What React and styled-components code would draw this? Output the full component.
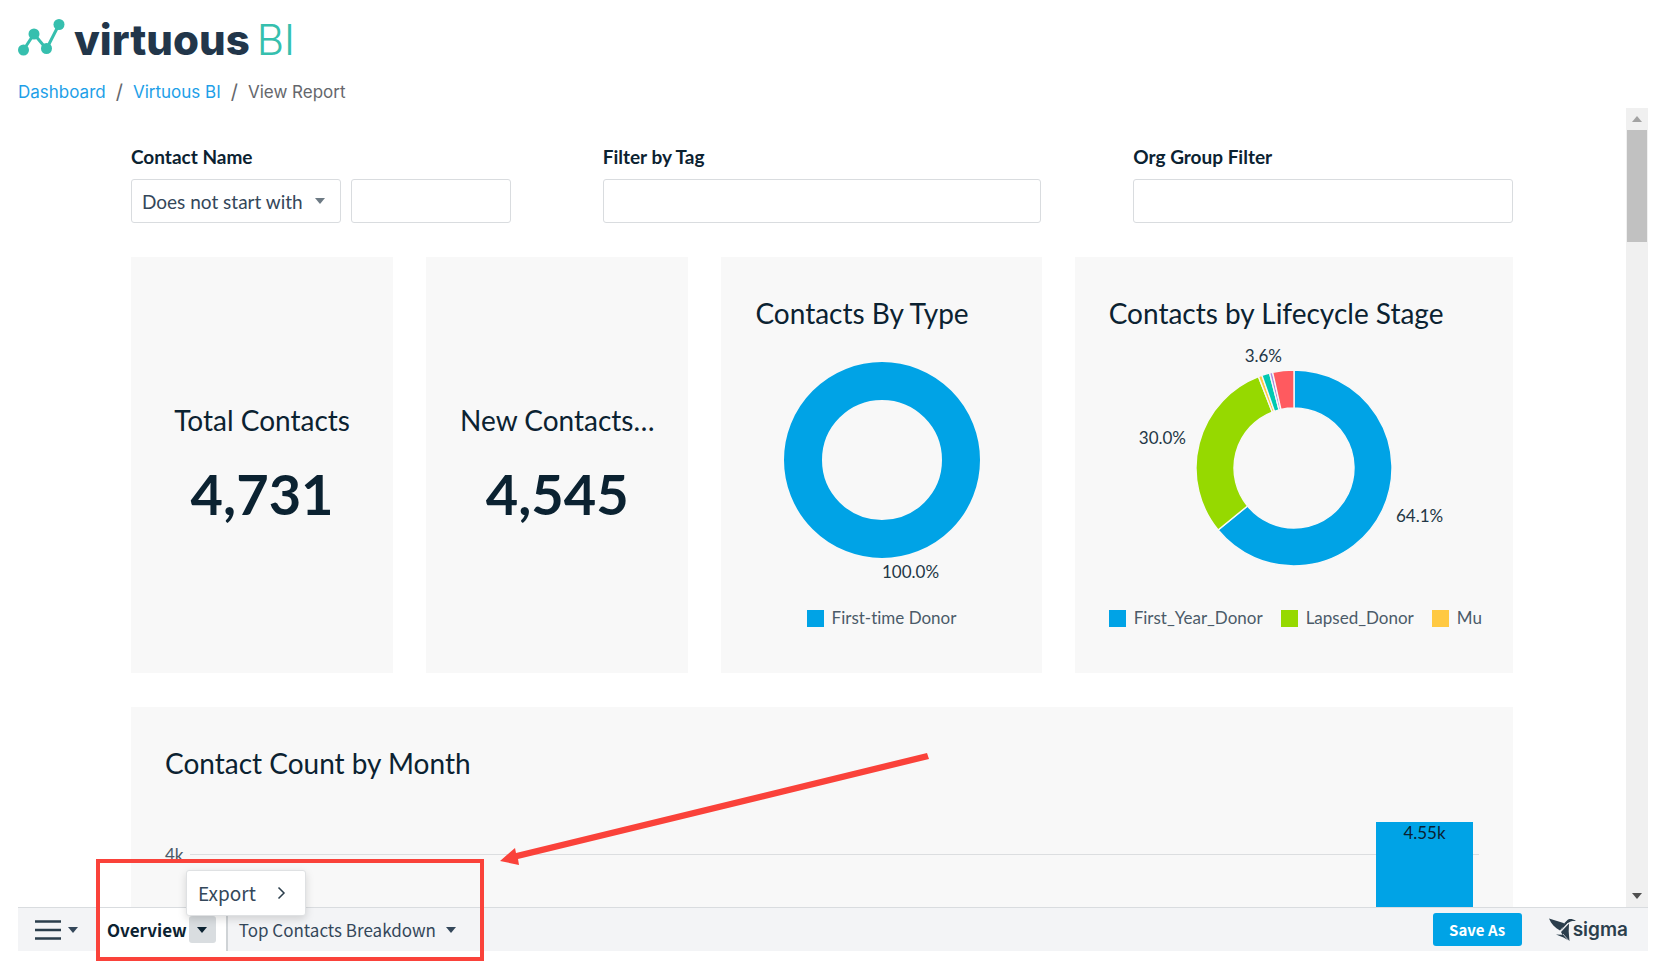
import React, { useState } from 'react'
import styled, { createGlobalStyle } from 'styled-components'

const colors = {
  ink: '#0b2231',
  text: '#34475a',
  muted: '#4b5b69',
  blue: '#00a3e6',
  green: '#96d900',
  yellow: '#ffc942',
  teal: '#00c9b1',
  purple: '#a98be0',
  red: '#ff5a5f',
  card: '#f8f8f8',
  bar: '#f3f4f6',
  border: '#d9dcdf',
  callout: '#fa423a'
}

const GlobalStyle = createGlobalStyle`
  * {
    box-sizing: border-box;
  }

  body {
    margin: 0;
    background: white;
    color: ${colors.ink};
    font-family: Lato, sans-serif;
    font-variant-ligatures: none;
  }

  button, input, select {
    font: inherit;
    color: inherit;
  }
`

const Page = styled.div`
  display: flex;
  flex-direction: column;
  height: 100vh;
  padding: 0 6px 13px 18px;
  overflow: hidden;
`
const Header = styled.header`
  flex: 0 0 108px;
  padding-top: 16px;
  font-family: Inter, sans-serif;
`
const Logo = styled.div`
  display: flex;
  align-items: center;
  height: 48px;
  color: #22364a;
  font-size: 42px;
  line-height: 48px;
  font-weight: 800;

  svg {
    margin-right: 8px;
  }
`
const LogoSuffix = styled.span`
  margin-left: 7px;
  color: #36bfae;
  font-weight: 300;
`
const Breadcrumb = styled.nav`
  display: flex;
  gap: 10px;
  margin-top: 16px;
  color: #65676c;
  font-size: 17px;
  line-height: 24px;

  a {
    color: #1e9fe8;
    text-decoration: none;
  }
`
const Separator = styled.span`
  font-size: 20px;
`
const Viewport = styled.div`
  display: flex;
  flex: 1;
  min-height: 0;
`
const Content = styled.main`
  flex: 1;
  min-width: 0;
  padding: 36px 113px 0;
  overflow: hidden;
`
const Filters = styled.div`
  display: grid;
  grid-template-columns: 380fr 439fr 380fr;
  column-gap: 92px;
  margin-bottom: 34px;
`
const Label = styled.label`
  display: block;
  margin-bottom: 9px;
  font-size: 19px;
  line-height: 26px;
  font-weight: 700;
`
const Controls = styled.div`
  display: flex;
  gap: 10px;
`
const SelectBox = styled.div`
  position: relative;
  flex: 0 0 210px;

  svg {
    position: absolute;
    right: 16px;
    top: 19px;
    pointer-events: none;
  }
`
const Select = styled.select`
  width: 100%;
  height: 44px;
  padding: 0 10px;
  appearance: none;
  border: 1px solid ${colors.border};
  border-radius: 3px;
  background: white;
  color: ${colors.text};
  font-size: 19px;
`
const Input = styled.input`
  width: 100%;
  min-width: 0;
  height: 44px;
  padding: 0 12px;
  border: 1px solid ${colors.border};
  border-radius: 3px;
  font-size: 19px;
`
const Cards = styled.div`
  display: grid;
  grid-template-columns: 262fr 262fr 320fr 438fr;
  gap: 33px;
`
const Card = styled.section`
  min-width: 0;
  height: 416px;
  padding: 39px 34px 0;
  background: ${colors.card};
`
const Kpi = styled(Card)`
  display: flex;
  flex-direction: column;
  align-items: center;
  justify-content: center;
  gap: 22px;
  padding: 2px 0 0;
`
const Title = styled.h2`
  margin: 0;
  font-size: 28px;
  line-height: 34px;
  font-weight: 400;
`
const KpiValue = styled.div`
  font-size: 56px;
  line-height: 70px;
  font-weight: 700;
`
const Chart = styled.svg`
  display: block;
  margin: 0 auto;
  overflow: visible;
  fill: #233746;
  font-size: 17px;
`
const Legend = styled.div`
  display: flex;
  justify-content: ${props => (props.$start ? 'flex-start' : 'center')};
  gap: 18px;
  color: ${colors.muted};
  font-size: 17px;
  line-height: 36px;
  white-space: nowrap;
`
const LegendItem = styled.div`
  display: flex;
  align-items: center;
  gap: 8px;

  &::before {
    content: '';
    width: 17px;
    height: 17px;
    background: ${props => props.$color};
  }
`
const MonthCard = styled(Card)`
  margin-top: 34px;
`
const Plot = styled.div`
  display: grid;
  grid-template-columns: auto 1fr;
  column-gap: 6px;
  margin-top: 42px;
  color: ${colors.muted};
  font-size: 17px;
`
const Tick = styled.div`
  padding-top: 23px;
  line-height: 20px;
`
const PlotArea = styled.div`
  display: flex;
  justify-content: flex-end;
  height: 260px;
  padding-right: 6px;
  background: linear-gradient(#dcdee0, #dcdee0) 0 32px / 100% 1px no-repeat;
`
const Bar = styled.div`
  width: 97px;
  background: ${colors.blue};
  color: ${colors.ink};
  line-height: 22px;
  text-align: center;
`
const Scrollbar = styled.div`
  display: flex;
  flex: 0 0 22px;
  flex-direction: column;
  align-items: center;
  background: #f0f0f0;
`
const ScrollButton = styled.button`
  display: flex;
  align-items: center;
  justify-content: center;
  width: 22px;
  height: 22px;
  padding: 0;
  border: 0;
  background: none;
`
const Thumb = styled.div`
  width: 20px;
  height: 112px;
  margin-bottom: auto;
  background: #c1c1c1;
`
const BottomBar = styled.footer`
  position: relative;
  display: flex;
  flex: 0 0 44px;
  align-items: stretch;
  border-top: 1px solid ${colors.border};
  background: ${colors.bar};
  color: ${colors.text};
  font-family: 'Noto Sans CJK SC', sans-serif;
`
const MenuButton = styled.button`
  display: flex;
  flex: 0 0 78px;
  align-items: center;
  gap: 7px;
  padding: 0 0 0 17px;
  border: 0;
  background: none;
`
const Tab = styled.div`
  position: relative;
  display: flex;
  align-items: center;
  padding: 0 10px 0 11px;
  border-right: ${props => (props.$active ? '2px solid #cfd3d6' : '0')};
  background: ${props => (props.$active ? 'white' : 'none')};
  color: ${props => (props.$active ? colors.ink : colors.text)};
`
const TabName = styled.button`
  padding: 0;
  border: 0;
  background: none;
  font-size: 17px;
  line-height: 26px;
  font-weight: ${props => (props.$active ? 700 : 400)};
`
const TabCaret = styled.button`
  display: flex;
  align-items: center;
  justify-content: center;
  width: 27px;
  height: 27px;
  margin-left: 2px;
  padding: 0;
  border: 0;
  border-radius: 3px;
  background: ${props => (props.$open ? '#d9dde0' : 'none')};
`
const Menu = styled.div`
  position: absolute;
  left: 90px;
  bottom: 35px;
  z-index: 1;
  border: 1px solid #dfe1e3;
  border-radius: 3px;
  background: white;
  box-shadow: 0 3px 8px rgba(0, 0, 0, 0.15);
`
const MenuItem = styled.button`
  display: flex;
  align-items: center;
  justify-content: space-between;
  width: 118px;
  height: 44px;
  padding: 0 19px 0 11px;
  border: 0;
  background: none;
  color: ${colors.text};
  font-size: 19px;
  line-height: 26px;
`
const Actions = styled.div`
  display: flex;
  align-items: center;
  gap: 27px;
  margin-left: auto;
  padding-right: 20px;
`
const SaveButton = styled.button`
  width: 89px;
  height: 33px;
  padding: 0;
  border: 0;
  border-radius: 3px;
  background: ${colors.blue};
  color: white;
  font-size: 15px;
  line-height: 22px;
  font-weight: 700;
`
const Sigma = styled.a`
  display: flex;
  align-items: center;
  color: #2b3e4c;
  font-family: Inter, sans-serif;
  font-size: 19px;
  line-height: 24px;
  font-weight: 600;
  text-decoration: none;

  svg {
    margin-right: -3px;
  }
`
const Highlight = styled.div`
  position: absolute;
  left: 78px;
  top: -49px;
  z-index: 2;
  width: 388px;
  height: 102px;
  border: 4px solid ${colors.callout};
  pointer-events: none;
`
const Arrow = styled.svg`
  position: absolute;
  left: 482px;
  top: -158px;
  z-index: 2;
  fill: ${colors.callout};
  pointer-events: none;
`

const Caret = ({ color = colors.text, up }) => (
  <svg width='10' height='6' viewBox='0 0 10 6' aria-hidden='true'>
    <path d={up ? 'M0 6L5 0l5 6z' : 'M0 0h10L5 6z'} fill={color} />
  </svg>
)

const point = (radius, share) => {
  const angle = share * Math.PI * 2
  return `${radius * Math.sin(angle)} ${-radius * Math.cos(angle)}`
}

const Donut = ({ slices, cy, children }) => {
  let total = 0
  return (
    <Chart width='252' height='270' viewBox={`-126 ${-cy} 252 270`}>
      {slices.length === 1 ? (
        <circle r='79' fill='none' stroke={slices[0].color} strokeWidth='38' />
      ) : (
        slices.map(({ color, value }) => {
          const from = total / 100
          total += value
          const to = total / 100
          const large = value > 50 ? 1 : 0
          return (
            <path
              key={color}
              d={`M${point(98, from)}A98 98 0 ${large} 1 ${point(98, to)}L${point(60, to)}A60 60 0 ${large} 0 ${point(60, from)}Z`}
              fill={color}
              stroke={colors.card}
              strokeWidth='1.4'
            />
          )
        })
      )}
      {children}
    </Chart>
  )
}

const stages = [
  { color: colors.blue, value: 64.1 },
  { color: colors.green, value: 30 },
  { color: colors.yellow, value: 0.6 },
  { color: colors.teal, value: 1.3 },
  { color: colors.purple, value: 0.5 },
  { color: colors.red, value: 3.5 }
]

const App = () => {
  const [open, setOpen] = useState(true)
  const [operator, setOperator] = useState('Does not start with')

  return (
    <Page>
      <GlobalStyle />
      <Header>
        <Logo>
          <svg width='48' height='48' viewBox='0 0 48 48' aria-hidden='true'>
            <g fill='#36bfae'>
              <path d='M5.5 34L16 18l12.5 15L41 8.5' fill='none' stroke='#36bfae' strokeWidth='3' />
              <circle cx='5.5' cy='34' r='5.5' />
              <circle cx='16' cy='18' r='5.5' />
              <circle cx='28.5' cy='32.5' r='5.5' />
              <circle cx='41' cy='8.5' r='5.5' />
            </g>
          </svg>
          virtuous<LogoSuffix>BI</LogoSuffix>
        </Logo>
        <Breadcrumb aria-label='Breadcrumb'>
          <a href='#dashboard'>Dashboard</a>
          <Separator>/</Separator>
          <a href='#bi'>Virtuous BI</a>
          <Separator>/</Separator>
          <span>View Report</span>
        </Breadcrumb>
      </Header>
      <Viewport>
        <Content>
          <Filters>
            <div>
              <Label htmlFor='name'>Contact Name</Label>
              <Controls>
                <SelectBox>
                  <Select
                    aria-label='Contact name operator'
                    value={operator}
                    onChange={e => setOperator(e.target.value)}
                  >
                    <option>Does not start with</option>
                    <option>Starts with</option>
                  </Select>
                  <Caret color='#6d7a84' />
                </SelectBox>
                <Input id='name' />
              </Controls>
            </div>
            <div>
              <Label htmlFor='tag'>Filter by Tag</Label>
              <Input id='tag' />
            </div>
            <div>
              <Label htmlFor='group'>Org Group Filter</Label>
              <Input id='group' />
            </div>
          </Filters>
          <Cards>
            <Kpi>
              <Title>Total Contacts</Title>
              <KpiValue>4,731</KpiValue>
            </Kpi>
            <Kpi>
              <Title>New Contacts…</Title>
              <KpiValue>4,545</KpiValue>
            </Kpi>
            <Card>
              <Title>Contacts By Type</Title>
              <Donut cy={130} slices={[{ color: colors.blue, value: 100 }]}>
                <text x='0' y='118'>
                  100.0%
                </text>
              </Donut>
              <Legend>
                <LegendItem $color={colors.blue}>First-time Donor</LegendItem>
              </Legend>
            </Card>
            <Card>
              <Title>Contacts by Lifecycle Stage</Title>
              <Donut cy={138} slices={stages}>
                <text x='-12' y='-106' textAnchor='end'>
                  3.6%
                </text>
                <text x='-108' y='-24' textAnchor='end'>
                  30.0%
                </text>
                <text x='102' y='54'>
                  64.1%
                </text>
              </Donut>
              <Legend $start>
                <LegendItem $color={colors.blue}>First_Year_Donor</LegendItem>
                <LegendItem $color={colors.green}>Lapsed_Donor</LegendItem>
                <LegendItem $color={colors.yellow}>Mu</LegendItem>
              </Legend>
            </Card>
          </Cards>
          <MonthCard>
            <Title>Contact Count by Month</Title>
            <Plot>
              <Tick>4k</Tick>
              <PlotArea>
                <Bar>4.55k</Bar>
              </PlotArea>
            </Plot>
          </MonthCard>
        </Content>
        <Scrollbar>
          <ScrollButton aria-label='Scroll up'>
            <Caret color='#a3a3a3' up />
          </ScrollButton>
          <Thumb />
          <ScrollButton aria-label='Scroll down'>
            <Caret color='#505050' />
          </ScrollButton>
        </Scrollbar>
      </Viewport>
      <BottomBar>
        <MenuButton aria-label='Pages'>
          <svg width='26' height='20' viewBox='0 0 26 20' aria-hidden='true'>
            <path d='M0 1.5h26M0 10h26M0 18.5h26' stroke='#2b3e4c' strokeWidth='2.6' />
          </svg>
          <Caret />
        </MenuButton>
        <Tab $active>
          <TabName $active>Overview</TabName>
          <TabCaret $open={open} aria-label='Overview options' onClick={() => setOpen(!open)}>
            <Caret color={colors.ink} />
          </TabCaret>
          {open && (
            <Menu>
              <MenuItem>
                Export
                <svg width='9' height='14' viewBox='0 0 9 14' aria-hidden='true'>
                  <path d='M1.5 1.5L7 7l-5.5 5.5' fill='none' stroke='#2b3e4c' strokeWidth='1.5' />
                </svg>
              </MenuItem>
            </Menu>
          )}
        </Tab>
        <Tab>
          <TabName>Top Contacts Breakdown</TabName>
          <TabCaret aria-label='Top Contacts Breakdown options'>
            <Caret />
          </TabCaret>
        </Tab>
        <Actions>
          <SaveButton>Save As</SaveButton>
          <Sigma href='#sigma'>
            <svg width='27' height='24' viewBox='0 0 27 24' aria-hidden='true'>
              <g fill='#2b3e4c'>
                <path d='M0 .5L14.500 5l1.500 1.500-5 6C6 10 2 5.500 0 .5z' />
                <path d='M15.500 5L18 2.500c2-2 5-2 9 .5-4-.3-6 .3-8 2l-7 7.500z' />
                <path d='M12 14l8-8.500-.3 8 .8 9.500-6-3.500-7.500-3 6.500.3z' />
              </g>
              <path d='M11 13.500L19 5M14 16l6 7' stroke={colors.bar} strokeWidth='.7' />
            </svg>
            sigma
          </Sigma>
        </Actions>
        <Highlight />
        <Arrow width='432' height='120' viewBox='0 0 432 120' aria-hidden='true'>
          <path d='M427 3l2 6L18 109l1 6L0 111 15 98l1 5z' />
        </Arrow>
      </BottomBar>
    </Page>
  )
}

export default App
